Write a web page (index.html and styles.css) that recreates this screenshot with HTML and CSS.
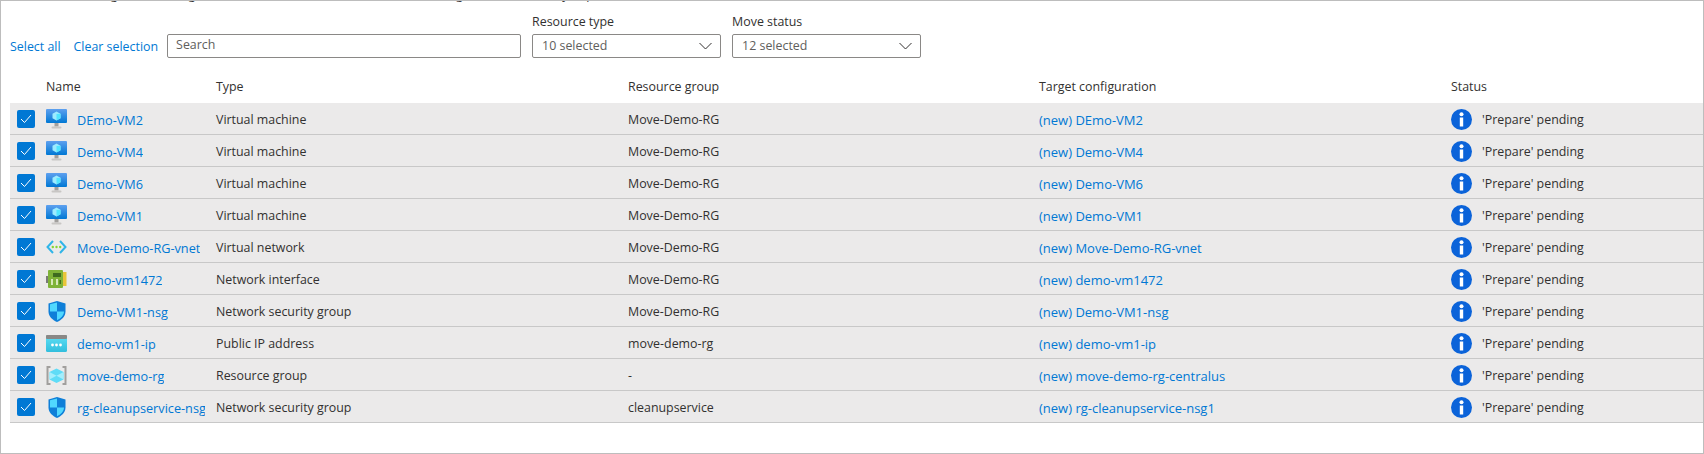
FILE: index.html
```html
<!DOCTYPE html>
<html lang="en">
<head>
  <meta charset="UTF-8">
  <title>Move resources</title>
  <link rel="stylesheet" href="styles.css">
</head>
<body>
  <svg class="defs" width="0" height="0">
    <defs>
      <linearGradient id="sky" x1="0" y1="0" x2="0" y2="1"><stop offset="0" stop-color="#5ea0ef"/><stop offset="1" stop-color="#0078d4"/></linearGradient>
      <linearGradient id="cyan" x1="0" y1="0" x2="0" y2="1"><stop offset="0" stop-color="#5fe0f5"/><stop offset="1" stop-color="#32bedd"/></linearGradient>
      <symbol id="i-vm" viewBox="0 0 21 20">
        <rect x="0" y="0" width="21" height="14" rx="1" fill="url(#sky)"/>
        <path d="M10.5 2.500l4 2.200v4.600l-4 2.200-4-2.200V4.700z" fill="#9cebff"/>
        <path d="M10.500 5l4-.3v4.600l-4 2.200z" fill="#50e6ff"/>
        <rect x="8.500" y="14" width="4" height="3.500" fill="#a19f9d"/>
        <rect x="5.500" y="17.500" width="10" height="2" rx="1" fill="#c8c6c4"/>
      </symbol>
      <symbol id="i-vnet" viewBox="0 0 21 14">
        <path d="M7 1L1.500 7 7 13" fill="none" stroke="#30b5e8" stroke-width="2"/>
        <path d="M14 1l5.500 6L14 13" fill="none" stroke="#30b5e8" stroke-width="2"/>
        <circle cx="6.800" cy="7" r="1.200" fill="#86d633"/>
        <circle cx="10.500" cy="7" r="1.200" fill="#86d633"/>
        <circle cx="14.200" cy="7" r="1.200" fill="#86d633"/>
      </symbol>
      <symbol id="i-nic" viewBox="0 0 21 18">
        <rect x="0" y="6" width="2" height="7" fill="#7a7a7a"/>
        <rect x="2" y="0" width="15" height="18" rx="1" fill="#7fb338"/>
        <rect x="17" y="2" width="3.500" height="14" fill="#e8c53a"/>
        <rect x="7" y="3" width="8" height="4" fill="#3e6b1f"/>
        <rect x="5" y="9" width="2" height="6" fill="#d6e8b8"/>
        <rect x="10" y="9" width="2" height="6" fill="#d6e8b8"/>
        <rect x="13.500" y="10" width="1.500" height="4" fill="#3e6b1f"/>
      </symbol>
      <symbol id="i-nsg" viewBox="0 0 18 21">
        <path d="M9 0l8.500 2.500v8c0 5-4 8.500-8.500 10.500C4.500 19 .5 15.500 .5 10.500v-8z" fill="#0f7fd8"/>
        <path d="M9 1.500v9H2V3.300zM9 10.500h7c0 4-3.300 7-7 8.800z" fill="#50d8ff"/>
      </symbol>
      <symbol id="i-ip" viewBox="0 0 21 17">
        <rect x="0" y="0" width="21" height="17" rx="1.500" fill="url(#cyan)"/>
        <rect x="0" y="0" width="21" height="4" rx="1" fill="#8a8886"/>
        <circle cx="6.500" cy="10" r="1.400" fill="#fff"/>
        <circle cx="10.500" cy="10" r="1.400" fill="#fff"/>
        <circle cx="14.500" cy="10" r="1.400" fill="#fff"/>
      </symbol>
      <symbol id="i-rg" viewBox="0 0 21 19">
        <path d="M4.500 1H1.500v17h3" fill="none" stroke="#a19f9d" stroke-width="2"/>
        <path d="M16.500 1h3v17h-3" fill="none" stroke="#a19f9d" stroke-width="2"/>
        <path d="M10.500 2.500l7 3.500v7.500l-7 3.500-7-3.500V6z" fill="#5fdcf7"/>
        <path d="M3.500 6l7 3.700 7-3.700v7.500l-7-3.800-7 3.800z" fill="#a4eefc"/>
      </symbol>
      <symbol id="i-info" viewBox="0 0 21 21">
        <circle cx="10.500" cy="10.500" r="10.500" fill="#0b63d9"/>
        <circle cx="10.500" cy="5.300" r="2" fill="#fff"/>
        <rect x="8.800" y="8.500" width="3.400" height="9" fill="#fff"/>
      </symbol>
    </defs>
  </svg>

  <div class="frame">
    <div class="cutoff"><span>Choose among the following listed resources that will be moved to the target and include any dependencies.</span></div>

    <div class="toolbar">
      <a class="action">Select all</a>
      <a class="action">Clear selection</a>
      <div class="search">Search</div>
      <div class="filter">
        <label>Resource type</label>
        <div class="dropdown">10 selected
          <svg width="13" height="8" viewBox="0 0 13 8"><path d="M.5 1l6 6 6-6" fill="none" stroke="#323130"/></svg>
        </div>
      </div>
      <div class="filter">
        <label>Move status</label>
        <div class="dropdown">12 selected
          <svg width="13" height="8" viewBox="0 0 13 8"><path d="M.5 1l6 6 6-6" fill="none" stroke="#323130"/></svg>
        </div>
      </div>
    </div>

    <div class="row head">
      <div></div>
      <div>Name</div>
      <div>Type</div>
      <div>Resource group</div>
      <div>Target configuration</div>
      <div>Status</div>
    </div>

    <div id="rows"></div>
  </div>

  <script>
    const items = [
      ["DEmo-VM2", "Virtual machine", "Move-Demo-RG", "DEmo-VM2", "vm", 21, 20],
      ["Demo-VM4", "Virtual machine", "Move-Demo-RG", "Demo-VM4", "vm", 21, 20],
      ["Demo-VM6", "Virtual machine", "Move-Demo-RG", "Demo-VM6", "vm", 21, 20],
      ["Demo-VM1", "Virtual machine", "Move-Demo-RG", "Demo-VM1", "vm", 21, 20],
      ["Move-Demo-RG-vnet", "Virtual network", "Move-Demo-RG", "Move-Demo-RG-vnet", "vnet", 21, 14],
      ["demo-vm1472", "Network interface", "Move-Demo-RG", "demo-vm1472", "nic", 21, 18],
      ["Demo-VM1-nsg", "Network security group", "Move-Demo-RG", "Demo-VM1-nsg", "nsg", 18, 21],
      ["demo-vm1-ip", "Public IP address", "move-demo-rg", "demo-vm1-ip", "ip", 21, 17],
      ["move-demo-rg", "Resource group", "-", "move-demo-rg-centralus", "rg", 21, 19],
      ["rg-cleanupservice-nsg1", "Network security group", "cleanupservice", "rg-cleanupservice-nsg1", "nsg", 18, 21]
    ];

    const tick = '<svg width="12" height="10" viewBox="0 0 12 10"><path d="M1 5l3.500 3.500L11 1" fill="none" stroke="#fff"/></svg>';

    document.getElementById("rows").innerHTML = items.map(function (it) {
      return `
        <div class="row item">
          <div class="check">${tick}</div>
          <div class="name">
            <span class="icon"><svg width="${it[5]}" height="${it[6]}"><use href="#i-${it[4]}"/></svg></span>
            <a class="link clip">${it[0]}</a>
          </div>
          <div class="text">${it[1]}</div>
          <div class="text">${it[2]}</div>
          <div class="text"><a class="link">(new) ${it[3]}</a></div>
          <div class="status"><svg width="21" height="21"><use href="#i-info"/></svg><span class="text">'Prepare' pending</span></div>
        </div>`;
    }).join("");
  </script>
</body>
</html>
```

FILE: styles.css
```css
html, body {
  margin: 0;
  height: 100%;
}
body {
  font-family: "Open Sans", "Noto Sans", sans-serif;
  font-size: 12.4px;
  color: #323130;
  background: #fff;
  overflow: hidden;
}
.defs {
  position: absolute;
}
.frame {
  box-sizing: border-box;
  height: 454px;
  border: 1px solid #bdbdbd;
  overflow: hidden;
}
.cutoff {
  height: 2px;
  overflow: hidden;
  padding-left: 30px;
}
.cutoff span {
  display: block;
  margin-top: -15px;
  white-space: nowrap;
}
a {
  color: #0078d4;
}
.toolbar {
  display: flex;
  align-items: flex-end;
  height: 55px;
  padding-left: 9px;
}
.action {
  margin-right: 13px;
  line-height: 23px;
  white-space: nowrap;
}
.search, .dropdown {
  box-sizing: border-box;
  height: 24px;
  border: 1px solid #8a8886;
  border-radius: 2px;
  line-height: 20px;
  color: #605e5c;
}
.search {
  flex: none;
  width: 354px;
  padding-left: 8px;
  margin-left: -4px;
  margin-right: 11px;
}
.filter {
  margin-right: 11px;
}
.filter label {
  display: block;
  margin-bottom: 3px;
  line-height: 18px;
}
.dropdown {
  width: 189px;
  padding: 1px 8px 1px 9px;
  display: flex;
  justify-content: space-between;
  align-items: center;
}
.row {
  display: grid;
  grid-template-columns: 36px 170px 412px 411px 412px 1fr;
  align-items: center;
  margin-left: 9px;
}
.head {
  box-sizing: border-box;
  height: 45px;
  padding-top: 11px;
}
.item {
  box-sizing: border-box;
  height: 32px;
  padding-top: 1px;
  background: #ebeaea;
  border-bottom: 1px solid #c8c8c8;
}
.check {
  box-sizing: border-box;
  width: 18px;
  height: 18px;
  margin-left: 7px;
  background: #0078d4;
  border-radius: 2px;
  display: flex;
  align-items: center;
  justify-content: center;
}
.name {
  display: flex;
  align-items: center;
  min-width: 0;
  padding-right: 11px;
}
.icon {
  flex: none;
  width: 21px;
  margin-right: 10px;
  display: flex;
  align-items: center;
  justify-content: center;
}
.text, .link {
  padding-top: 1px;
}
.link {
  font-size: 13px;
}
.clip {
  font-size: 12.7px;
  overflow: hidden;
  white-space: nowrap;
}
.status {
  display: flex;
  align-items: center;
  gap: 10px;
}
```
